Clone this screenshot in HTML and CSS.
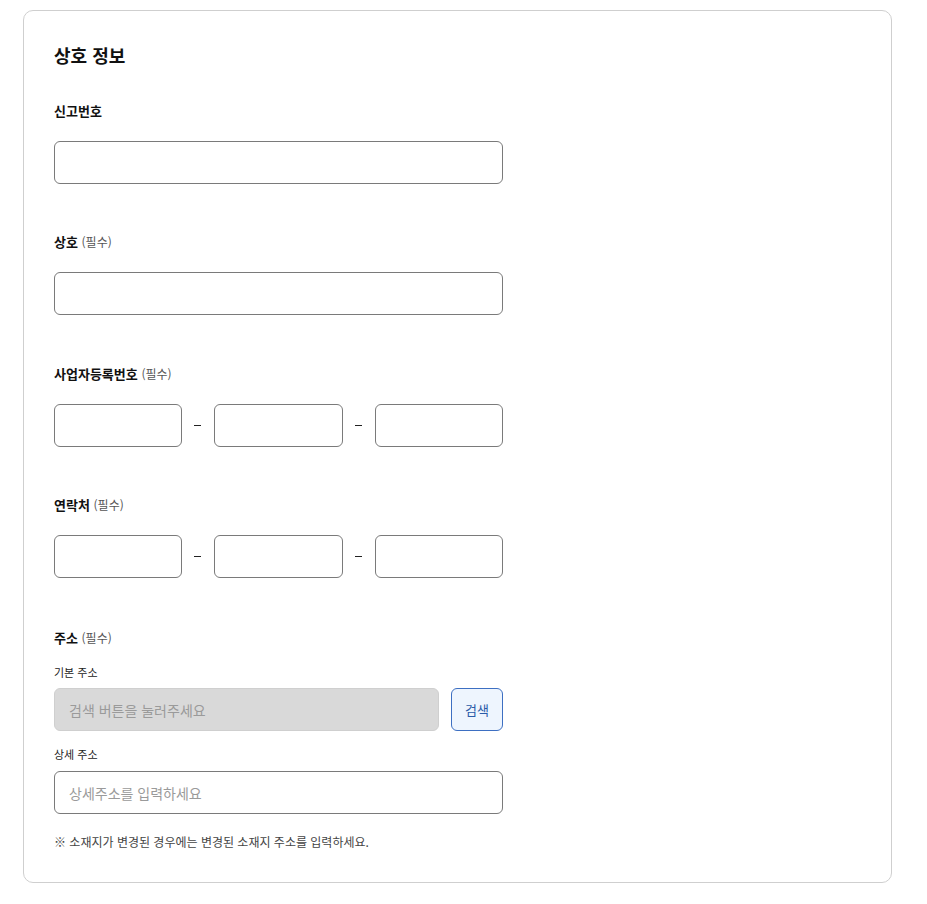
FILE: index.html
```html
<!DOCTYPE html>
<html lang="ko">
<head>
<meta charset="utf-8">
<link rel="stylesheet" href="styles.css">
</head>
<body>
<section class="card">
  <h2 class="title">상호 정보</h2>

  <div class="field">
    <div class="label">신고번호</div>
    <input class="input" type="text">
  </div>

  <div class="field wide">
    <div class="label">상호 <span class="req">(필수)</span></div>
    <input class="input" type="text">
  </div>

  <div class="field">
    <div class="label">사업자등록번호 <span class="req">(필수)</span></div>
    <div class="triple">
      <input class="input" type="text">
      <span class="dash"></span>
      <input class="input" type="text">
      <span class="dash"></span>
      <input class="input" type="text">
    </div>
  </div>

  <div class="field wider">
    <div class="label">연락처 <span class="req">(필수)</span></div>
    <div class="triple">
      <input class="input" type="text">
      <span class="dash"></span>
      <input class="input" type="text">
      <span class="dash"></span>
      <input class="input" type="text">
    </div>
  </div>

  <div class="field last">
    <div class="label">주소 <span class="req">(필수)</span></div>
    <div class="sublabel first">기본 주소</div>
    <div class="search-row">
      <input class="input disabled" type="text" placeholder="검색 버튼을 눌러주세요" disabled>
      <button class="search-btn" type="button">검색</button>
    </div>
    <div class="sublabel">상세 주소</div>
    <input class="input" type="text" placeholder="상세주소를 입력하세요">
    <p class="note">※ 소재지가 변경된 경우에는 변경된 소재지 주소를 입력하세요.</p>
  </div>
</section>
</body>
</html>
```

FILE: styles.css
```css
* { box-sizing: border-box; }

body {
  margin: 0;
  padding: 10px 0 0 23px;
  background: #fff;
  font-family: "Noto Sans CJK KR", "Noto Sans", sans-serif;
  color: #111;
}

.card {
  width: 869px;
  height: 873px;
  border: 1px solid #cfcfcf;
  border-radius: 10px;
  padding: 31px 30px 31px 30px;
}

.title {
  margin: 0 0 33px 0;
  font-size: 18px;
  line-height: 26px;
  font-weight: 700;
  color: #111;
}

.field {
  width: 449px;
  margin-bottom: 48px;
}

.field.wide { margin-bottom: 49px; }
.field.wider { margin-bottom: 50px; }
.field.last { margin-bottom: 0; }

.label {
  font-size: 13px;
  line-height: 20px;
  font-weight: 700;
  color: #111;
  margin-bottom: 20px;
}

.req {
  font-size: 12px;
  font-weight: 400;
  color: #555;
}

.input {
  display: block;
  width: 100%;
  height: 43px;
  border: 1px solid #7a7a7a;
  border-radius: 6px;
  background: #fff;
  padding: 0 14px;
  font-family: inherit;
  font-size: 14px;
  color: #111;
  outline: none;
}

.input::placeholder { color: #9a9a9a; }

.triple {
  display: grid;
  grid-template-columns: 1fr 32px 1fr 32px 1fr;
  align-items: center;
}

.dash {
  display: block;
  width: 7px;
  height: 1px;
  background: #222;
  justify-self: center;
  margin-left: -1px;
}

.sublabel {
  font-size: 11px;
  line-height: 16px;
  color: #222;
  margin: 15px 0 9px 0;
}

.sublabel.first { margin-top: -4px; margin-bottom: 8px; }

.search-row {
  display: flex;
  gap: 12px;
}

.input.disabled {
  flex: 1;
  background: #d9d9d9;
  border-color: #cfcfcf;
}

.input.disabled::placeholder { color: #9a9a9a; }

.search-btn {
  width: 52px;
  height: 43px;
  flex: none;
  border: 1px solid #3d6fc2;
  border-radius: 6px;
  background: #eef5fe;
  color: #2b5ba8;
  font-family: inherit;
  font-size: 13px;
  padding: 0;
}

.note {
  margin: 19px 0 0 0;
  font-size: 12px;
  line-height: 18px;
  color: #444;
}
```
